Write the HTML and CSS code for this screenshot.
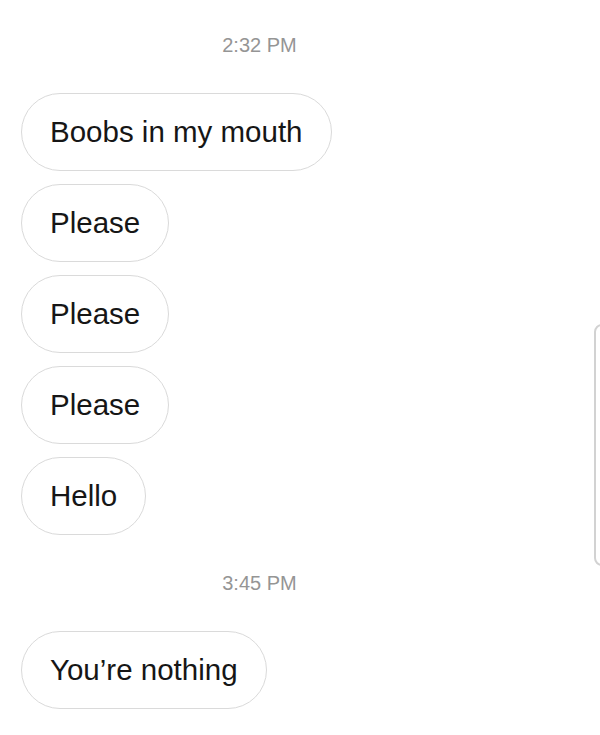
FILE: index.html
```html
<!DOCTYPE html>
<html lang="en">
<head>
  <meta charset="UTF-8" />
  <meta name="viewport" content="width=device-width, initial-scale=1.0"/>
  <title>Messages</title>
  <link rel="stylesheet" href="styles.css">
</head>
<body>

<div class="thread">
  <div class="stamp">2:32 PM</div>

  <div class="bubble">Boobs in my mouth</div>
  <div class="bubble">Please</div>
  <div class="bubble">Please</div>
  <div class="bubble">Please</div>
  <div class="bubble">Hello</div>

  <div class="stamp">3:45 PM</div>

  <div class="bubble">You’re nothing</div>
</div>

<!-- edge of the panel peeking in from the right -->
<div class="side-panel"></div>

</body>
</html>
```

FILE: styles.css
```css
body {
  margin: 0;
  background: #fff;
  font-family: "Liberation Sans", Arial, sans-serif;
  color: #161616;
  position: relative;
  height: 735px;
  overflow: hidden;
}

.thread {
  width: 477px;
  padding: 10px 0 0 21px;
  display: flex;
  flex-direction: column;
  align-items: flex-start;
  gap: 13px;
}

.stamp {
  align-self: stretch;
  text-align: center;
  font-size: 20px;
  line-height: 20px;
  padding: 25px 0;
  color: #959595;
}

.bubble {
  height: 76px;
  line-height: 76px;
  padding: 0 28px;
  border: 1px solid #dadada;
  border-radius: 40px;
  font-size: 29.5px;
  white-space: nowrap;
}

.side-panel {
  position: absolute;
  left: 594px;
  top: 324px;
  width: 20px;
  height: 238px;
  border: 2px solid #d2d2d2;
  border-radius: 8px;
}
```
